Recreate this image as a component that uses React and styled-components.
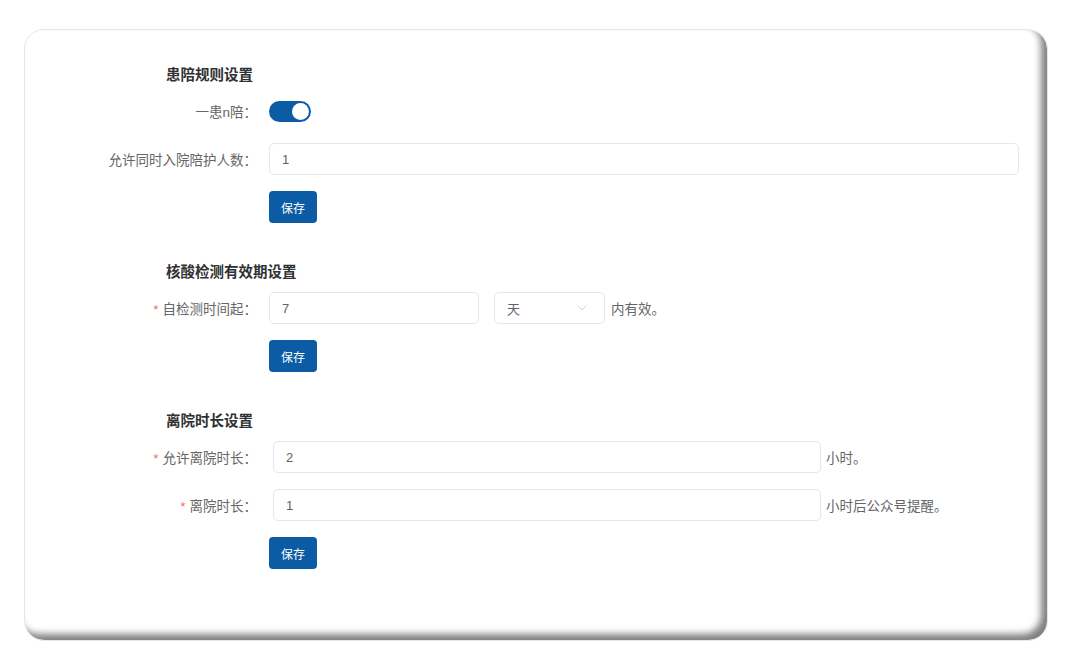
import styled, { createGlobalStyle } from 'styled-components';
import { ChevronDown } from 'lucide-react';

const GlobalStyle = createGlobalStyle`
  html, body {
    margin: 0;
    padding: 0;
    background: #ffffff;
  }
  body {
    font-family: "Liberation Sans", "Noto Sans CJK SC", sans-serif;
    color: #606266;
  }
`;

const Page = styled.div`
  padding: 29px 0 0 24px;
`;

const Card = styled.div`
  width: 1024px;
  height: 612px;
  box-sizing: border-box;
  padding: 35px 28px 0 0;
  border: 1px solid #e6e6e6;
  border-radius: 20px;
  background: #fff;
  box-shadow: inset -6px -6px 7px rgba(0, 0, 0, 0.5);
  display: flex;
  flex-direction: column;
  gap: 39px;
`;

const Section = styled.section`
  display: flex;
  flex-direction: column;
  gap: 16px;
`;

const Title = styled.h3`
  margin: 0 0 -6px 0;
  padding-left: 141px;
  font-size: 14.5px;
  line-height: 20px;
  font-weight: 700;
  color: #303133;
`;

const Row = styled.div`
  display: flex;
  align-items: center;
  height: 32px;
`;

const Label = styled.label`
  width: 244px;
  flex: none;
  box-sizing: border-box;
  padding-right: 12px;
  text-align: right;
  font-size: 13.5px;
  color: #666;
`;

const Star = styled.span`
  color: #f56c6c;
  margin-right: 4px;
`;

const Field = styled.div`
  display: flex;
  align-items: center;
  gap: ${(p) => p.$gap || 5}px;
  margin-left: ${(p) => p.$shift || 0}px;
  flex: ${(p) => (p.$grow ? 1 : 'none')};
`;

const Input = styled.div`
  width: ${(p) => (p.$width ? `${p.$width}px` : 'auto')};
  flex: ${(p) => (p.$width ? 'none' : 1)};
  height: 32px;
  box-sizing: border-box;
  border: 1px solid #e4e7ed;
  border-radius: 5px;
  padding: 0 12px;
  display: flex;
  align-items: center;
  justify-content: space-between;
  font-size: 13px;
  color: #606266;
  background: #fff;
`;

const Suffix = styled.span`
  font-size: 13.5px;
  color: #666;
  white-space: nowrap;
`;

const Switch = styled.div`
  width: 42px;
  height: 21px;
  border-radius: 11px;
  background: #0b5ba5;
  display: flex;
  align-items: center;
  justify-content: ${(p) => (p.$on ? 'flex-end' : 'flex-start')};
  padding: 0 2px;
  box-sizing: border-box;
`;

const Knob = styled.span`
  width: 17px;
  height: 17px;
  border-radius: 50%;
  background: #fff;
`;

const SaveButton = styled.button`
  width: 48px;
  height: 32px;
  border: none;
  border-radius: 4px;
  background: #0b5ba5;
  color: #fff;
  font-family: "Noto Sans CJK SC", sans-serif;
  font-size: 12px;
  padding: 0;
  cursor: pointer;
`;

const Chevron = styled(ChevronDown)`
  color: #c0c4cc;
  margin-right: 2px;
`;

export default function App() {
  return (
    <>
      <GlobalStyle />
      <Page>
        <Card>
          <Section>
            <Title>患陪规则设置</Title>
            <Row>
              <Label>一患n陪：</Label>
              <Switch $on>
                <Knob />
              </Switch>
            </Row>
            <Row>
              <Label>允许同时入院陪护人数：</Label>
              <Field $grow>
                <Input>1</Input>
              </Field>
            </Row>
            <Row>
              <Label />
              <SaveButton>保存</SaveButton>
            </Row>
          </Section>

          <Section>
            <Title>核酸检测有效期设置</Title>
            <Row>
              <Label>
                <Star>*</Star>自检测时间起：
              </Label>
              <Field $gap={15}>
                <Input $width={210}>7</Input>
                <Input $width={111}>
                  <span>天</span>
                  <Chevron size={16} strokeWidth={1.2} />
                </Input>
              </Field>
              <Suffix style={{ marginLeft: 6 }}>内有效。</Suffix>
            </Row>
            <Row>
              <Label />
              <SaveButton>保存</SaveButton>
            </Row>
          </Section>

          <Section>
            <Title>离院时长设置</Title>
            <Row>
              <Label>
                <Star>*</Star>允许离院时长：
              </Label>
              <Field $shift={4}>
                <Input $width={548}>2</Input>
                <Suffix>小时。</Suffix>
              </Field>
            </Row>
            <Row>
              <Label>
                <Star>*</Star>离院时长：
              </Label>
              <Field $shift={4}>
                <Input $width={548}>1</Input>
                <Suffix>小时后公众号提醒。</Suffix>
              </Field>
            </Row>
            <Row>
              <Label />
              <SaveButton>保存</SaveButton>
            </Row>
          </Section>
        </Card>
      </Page>
    </>
  );
}
